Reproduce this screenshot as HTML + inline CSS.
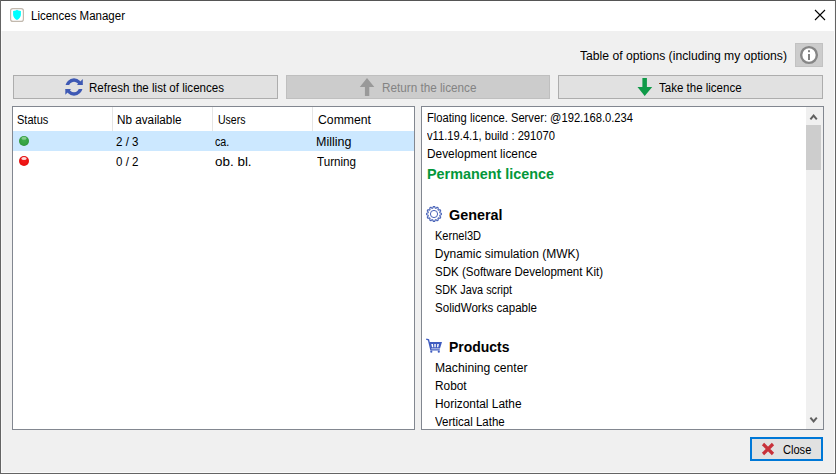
<!DOCTYPE html>
<html><head><meta charset="utf-8"><style>
html,body{margin:0;padding:0;}
body{width:836px;height:474px;position:relative;overflow:hidden;background:#f0f0f0;font-family:"Liberation Sans",sans-serif;}
.b{position:absolute;}
.t{position:absolute;white-space:pre;transform-origin:0 0;}
</style></head><body>
<div class="b" style="left:0px;top:0px;width:836px;height:474px;background:#f0f0f0;"></div>
<div class="b" style="left:0px;top:0px;width:836px;height:31px;background:#ffffff;"></div>
<div class="b" style="left:0px;top:0px;width:836px;height:1px;background:#555555;"></div>
<div class="b" style="left:0px;top:0px;width:1px;height:474px;background:#646464;"></div>
<div class="b" style="left:835px;top:0px;width:1px;height:474px;background:#646464;"></div>
<div class="b" style="left:0px;top:473px;width:836px;height:1px;background:#646464;"></div>
<div class="b" style="left:1px;top:472px;width:834px;height:1px;background:#fafafa;"></div>
<div class="b" style="left:834px;top:1px;width:1px;height:472px;background:#fafafa;"></div>
<div class="b" style="left:1px;top:31px;width:1px;height:442px;background:#f8f8f8;"></div>
<svg class="b" style="left:10px;top:8px" width="14" height="14" viewBox="0 0 14 14"><rect x="0.6" y="0.6" width="12.8" height="12.8" rx="2.2" fill="#fff" stroke="#c2b9ae" stroke-width="1.2"/><path d="M7 1.7 L8.3 2.6 L10.9 3.1 L10.9 7 C10.7 9.2 8.9 11.1 7 12 C5.1 11.1 3.3 9.2 3.1 7 L3.1 3.1 L5.7 2.6 Z" fill="#00ffff"/></svg>
<div class="t" style="left:31px;top:9.34px;font-size:12px;line-height:15px;color:#000;transform:scaleX(0.9586);">Licences Manager</div>
<svg class="b" style="left:814px;top:9px" width="12" height="12" viewBox="0 0 12 12"><path d="M1 1 L11 11 M11 1 L1 11" stroke="#000" stroke-width="1.1" fill="none"/></svg>
<div class="t" style="left:580px;top:49.34px;font-size:12px;line-height:15px;color:#000;transform:scaleX(1.0141);">Table of options (including my options)</div>
<div class="b" style="left:795px;top:43px;width:28px;height:24px;background:#cccccc;border:1px solid #c2c2c2;box-sizing:border-box;"></div>
<svg class="b" style="left:799px;top:45px" width="20" height="20" viewBox="0 0 20 20"><circle cx="10" cy="10" r="7.85" fill="#fff" stroke="#868686" stroke-width="2.4"/><rect x="9" y="5.2" width="2" height="2" fill="#808080"/><rect x="9" y="9" width="2" height="6" fill="#808080"/></svg>
<div class="b" style="left:13px;top:75px;width:265px;height:24px;background:#e1e1e1;border:1px solid #adadad;box-sizing:border-box;"></div>
<div class="b" style="left:286px;top:75px;width:264px;height:24px;background:#cccccc;border:1px solid #bfbfbf;box-sizing:border-box;"></div>
<div class="b" style="left:558px;top:75px;width:265px;height:24px;background:#e1e1e1;border:1px solid #adadad;box-sizing:border-box;"></div>
<svg class="b" style="left:65px;top:78px" width="18" height="18" viewBox="0 0 18 18"><defs><clipPath id="ct"><rect x="0" y="0" width="18" height="7"/></clipPath><clipPath id="cb"><rect x="0" y="11" width="18" height="7"/></clipPath></defs><circle cx="9" cy="9" r="6.9" stroke="#3e59b4" stroke-width="3.5" fill="none" clip-path="url(#ct)"/><circle cx="9" cy="9" r="6.9" stroke="#3e59b4" stroke-width="3.5" fill="none" clip-path="url(#cb)"/><path d="M17.8 1.1 L17.8 7 L11.9 7 Z" fill="#3e59b4"/><path d="M0.3 11 L6.1 11 L0.3 16.8 Z" fill="#3e59b4"/></svg>
<div class="t" style="left:88.6px;top:81.34px;font-size:12px;line-height:15px;color:#000;transform:scaleX(0.9639);">Refresh the list of licences</div>
<svg class="b" style="left:359px;top:77px" width="17" height="20" viewBox="0 0 17 20"><path d="M8 1 L15.3 10 L10.3 10 L10.3 19 L5.9 19 L5.9 10 L0.8 10 Z" fill="#999999"/></svg>
<div class="t" style="left:381.5px;top:81.34px;font-size:12px;line-height:15px;color:#838383;transform:scaleX(0.9770);">Return the licence</div>
<svg class="b" style="left:637px;top:77px" width="17" height="20" viewBox="0 0 17 20"><path d="M5.4 1 L9.9 1 L9.9 10 L15.2 10 L7.7 19 L0.5 10 L5.4 10 Z" fill="#0f9a48"/></svg>
<div class="t" style="left:659.3px;top:81.34px;font-size:12px;line-height:15px;color:#000;transform:scaleX(0.9599);">Take the licence</div>
<div class="b" style="left:12px;top:106px;width:403px;height:324px;background:#ffffff;border:1px solid #828790;box-sizing:border-box;"></div>
<div class="b" style="left:112px;top:107px;width:1px;height:24px;background:#e5e5e5;"></div>
<div class="b" style="left:212px;top:107px;width:1px;height:24px;background:#e5e5e5;"></div>
<div class="b" style="left:312px;top:107px;width:1px;height:24px;background:#e5e5e5;"></div>
<div class="b" style="left:13px;top:131px;width:401px;height:20px;background:#cce8ff;"></div>
<div class="t" style="left:17.3px;top:113.34px;font-size:12px;line-height:15px;color:#000;transform:scaleX(0.9201);">Status</div>
<div class="t" style="left:117px;top:113.34px;font-size:12px;line-height:15px;color:#000;transform:scaleX(0.9767);">Nb available</div>
<div class="t" style="left:217.7px;top:113.34px;font-size:12px;line-height:15px;color:#000;transform:scaleX(0.8776);">Users</div>
<div class="t" style="left:317.7px;top:113.34px;font-size:12px;line-height:15px;color:#000;transform:scaleX(1.0190);">Comment</div>
<svg class="b" style="left:18px;top:135px" width="12" height="12" viewBox="0 0 12 12"><defs><radialGradient id="g1" cx="0.5" cy="0.45" r="0.6"><stop offset="0" stop-color="#3fae4c"/><stop offset="0.7" stop-color="#34a040"/><stop offset="1" stop-color="#2a8834"/></radialGradient></defs><circle cx="6" cy="6" r="5" fill="url(#g1)"/><ellipse cx="6" cy="3.3" rx="2.6" ry="1.5" fill="#a8dcae" opacity="0.7"/></svg>
<svg class="b" style="left:18px;top:155px" width="12" height="12" viewBox="0 0 12 12"><defs><radialGradient id="g2" cx="0.5" cy="0.5" r="0.6"><stop offset="0" stop-color="#f41c1c"/><stop offset="0.75" stop-color="#e81010"/><stop offset="1" stop-color="#c40000"/></radialGradient></defs><circle cx="6" cy="6" r="5" fill="url(#g2)"/><ellipse cx="6" cy="3.4" rx="2.7" ry="1.5" fill="#ffffff" opacity="0.85"/></svg>
<div class="t" style="left:116px;top:135.34px;font-size:12px;line-height:15px;color:#000;transform:scaleX(0.9636);">2 / 3</div>
<div class="t" style="left:215.3px;top:135.34px;font-size:12px;line-height:15px;color:#000;transform:scaleX(0.8933);">ca.</div>
<div class="t" style="left:315.7px;top:135.34px;font-size:12px;line-height:15px;color:#000;transform:scaleX(1.0409);">Milling</div>
<div class="t" style="left:116px;top:155.34px;font-size:12px;line-height:15px;color:#000;transform:scaleX(0.9636);">0 / 2</div>
<div class="t" style="left:215.3px;top:155.34px;font-size:12px;line-height:15px;color:#000;transform:scaleX(1.1196);">ob. bl.</div>
<div class="t" style="left:317px;top:155.34px;font-size:12px;line-height:15px;color:#000;transform:scaleX(0.9691);">Turning</div>
<div class="b" style="left:421px;top:106px;width:403px;height:324px;background:#ffffff;border:1px solid #828790;box-sizing:border-box;"></div>
<div class="b" style="left:806px;top:107px;width:17px;height:322px;background:#f0f0f0;"></div>
<div class="b" style="left:806px;top:125px;width:15px;height:45px;background:#cdcdcd;"></div>
<svg class="b" style="left:809px;top:113px" width="10" height="8" viewBox="0 0 10 8"><path d="M1.4 6.3 L4.6 2.6 L7.8 6.3" stroke="#606060" stroke-width="2" fill="none"/></svg>
<svg class="b" style="left:809px;top:416px" width="10" height="8" viewBox="0 0 10 8"><path d="M1.4 1.7 L4.6 5.4 L7.8 1.7" stroke="#606060" stroke-width="2" fill="none"/></svg>
<div class="t" style="left:426.5px;top:111.34px;font-size:12px;line-height:15px;color:#000;transform:scaleX(0.9322);">Floating licence. Server: @192.168.0.234</div>
<div class="t" style="left:426.5px;top:129.34px;font-size:12px;line-height:15px;color:#000;transform:scaleX(0.9328);">v11.19.4.1, build : 291070</div>
<div class="t" style="left:426.5px;top:147.34px;font-size:12px;line-height:15px;color:#000;transform:scaleX(0.9875);">Development licence</div>
<div class="t" style="left:427px;top:163.93px;font-size:15.5px;line-height:19px;color:#03973a;font-weight:bold;transform:scaleX(0.9271);">Permanent licence</div>
<svg class="b" style="left:426px;top:206px" width="16" height="16" viewBox="0 0 16 16"><path id="gear" d="M6.81 2.12 L7.30 0.63 L8.70 0.63 L9.19 2.12 L9.91 2.31 L11.08 1.27 L12.29 1.97 L11.97 3.50 L12.50 4.03 L14.03 3.71 L14.73 4.92 L13.69 6.09 L13.88 6.81 L15.37 7.30 L15.37 8.70 L13.88 9.19 L13.69 9.91 L14.73 11.08 L14.03 12.29 L12.50 11.97 L11.97 12.50 L12.29 14.03 L11.08 14.73 L9.91 13.69 L9.19 13.88 L8.70 15.37 L7.30 15.37 L6.81 13.88 L6.09 13.69 L4.92 14.73 L3.71 14.03 L4.03 12.50 L3.50 11.97 L1.97 12.29 L1.27 11.08 L2.31 9.91 L2.12 9.19 L0.63 8.70 L0.63 7.30 L2.12 6.81 L2.31 6.09 L1.27 4.92 L1.97 3.71 L3.50 4.03 L4.03 3.50 L3.71 1.97 L4.92 1.27 L6.09 2.31 Z" fill="none" stroke="#4a64b8" stroke-width="1.1"/><circle cx="8" cy="8" r="3.6" fill="none" stroke="#4a64b8" stroke-width="1"/></svg>
<div class="t" style="left:448.5px;top:204.93px;font-size:15.5px;line-height:19px;color:#000;font-weight:bold;transform:scaleX(0.9268);">General</div>
<div class="t" style="left:434.8px;top:229.34px;font-size:12px;line-height:15px;color:#000;transform:scaleX(0.9195);">Kernel3D</div>
<div class="t" style="left:434.8px;top:247.34px;font-size:12px;line-height:15px;color:#000;">Dynamic simulation (MWK)</div>
<div class="t" style="left:434.8px;top:265.34px;font-size:12px;line-height:15px;color:#000;transform:scaleX(0.9615);">SDK (Software Development Kit)</div>
<div class="t" style="left:434.8px;top:283.34px;font-size:12px;line-height:15px;color:#000;transform:scaleX(0.9021);">SDK Java script</div>
<div class="t" style="left:434.8px;top:301.34px;font-size:12px;line-height:15px;color:#000;transform:scaleX(0.9638);">SolidWorks capable</div>
<svg class="b" style="left:426px;top:338px" width="17" height="16" viewBox="0 0 17 16"><path d="M0.2 1.1 L2.5 1.9 L4.9 11.9 L13.8 11.9" stroke="#3f5cc0" stroke-width="1.4" fill="none"/><path d="M3.3 4 L16 4 L14 10.5 L4.7 10.5 Z" fill="#3f5cc0"/><path d="M5.3 5.9 L7 5.9 L7.3 9.3 L6 9.3 Z M8.3 5.9 L9.8 5.9 L9.7 9.3 L8.4 9.3 Z M11.3 5.9 L12.9 5.9 L12.3 9.3 L11 9.3 Z" fill="#fff"/><circle cx="5.3" cy="13.7" r="1.1" fill="#3f5cc0"/><circle cx="12.8" cy="13.7" r="1.1" fill="#3f5cc0"/></svg>
<div class="t" style="left:448.8px;top:336.93px;font-size:15.5px;line-height:19px;color:#000;font-weight:bold;transform:scaleX(0.9006);">Products</div>
<div class="t" style="left:434.8px;top:361.34px;font-size:12px;line-height:15px;color:#000;transform:scaleX(1.0122);">Machining center</div>
<div class="t" style="left:434.8px;top:379.34px;font-size:12px;line-height:15px;color:#000;transform:scaleX(0.9868);">Robot</div>
<div class="t" style="left:434.8px;top:397.34px;font-size:12px;line-height:15px;color:#000;transform:scaleX(0.9898);">Horizontal Lathe</div>
<div class="t" style="left:434.8px;top:415.34px;font-size:12px;line-height:15px;color:#000;transform:scaleX(0.9585);">Vertical Lathe</div>
<div class="b" style="left:422px;top:428px;width:384px;height:1px;background:#ffffff;"></div>
<div class="b" style="left:421px;top:429px;width:403px;height:1px;background:#828790;"></div>
<div class="b" style="left:750px;top:437px;width:73px;height:24px;background:#e1e1e1;border:2px solid #0078d7;box-sizing:border-box;"></div>
<svg class="b" style="left:761px;top:442px" width="14" height="14" viewBox="0 0 14 14"><path d="M2 2 L12 12 M12 2 L2 12" stroke="#c8313a" stroke-width="3.2" fill="none"/></svg>
<div class="t" style="left:782.6px;top:443.34px;font-size:12px;line-height:15px;color:#000;transform:scaleX(0.9224);">Close</div>
</body></html>
